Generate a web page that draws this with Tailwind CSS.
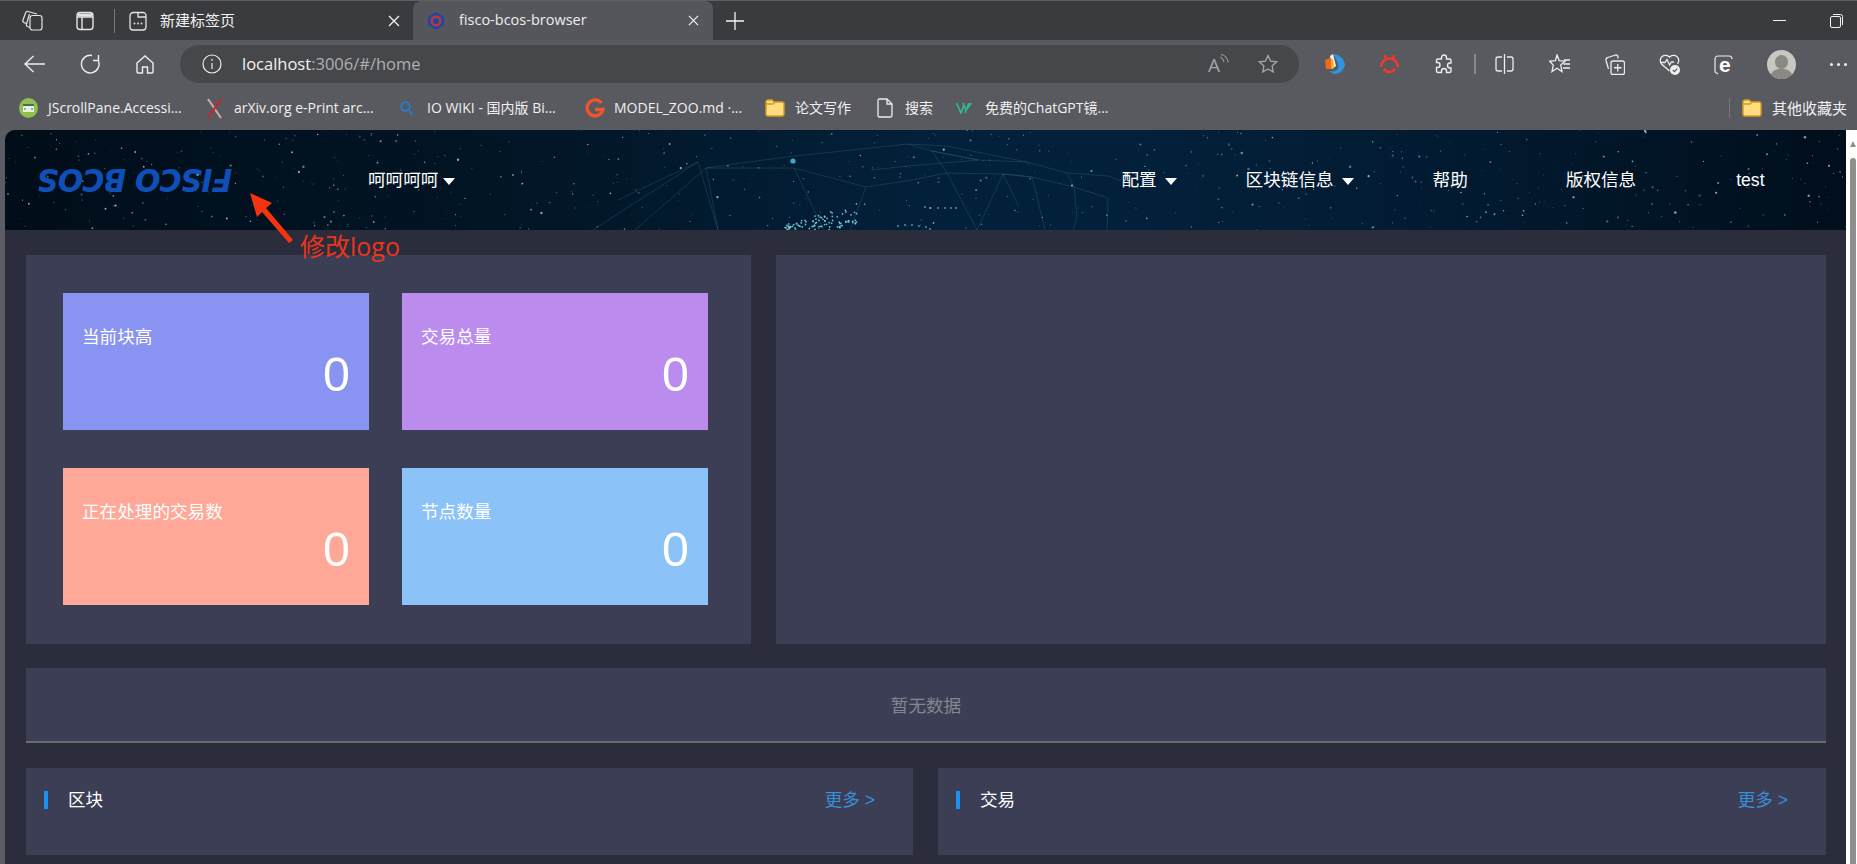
<!DOCTYPE html>
<html lang="en">
<head>
    <meta charset="UTF-8">
    <title>fisco-bcos-browser</title>
    <script src="https://cdn.jsdelivr.net/npm/@tailwindcss/browser@4"></script>
</head>
<body class="relative w-[1857px] h-[864px] overflow-hidden bg-[#5c5d62] font-['Open_Sans','Noto_Sans_CJK_SC',sans-serif]">

    <!-- tab strip -->
    <div class="flex items-center h-[40px] bg-[#3a3b3f] border-t border-[#5e5f63] text-[#f2f2f2]">
        <svg class="ml-[22px] w-[21px] h-[21px]" viewBox="0 0 21 21" fill="none" stroke="#e4e4e4" stroke-width="1.2"><rect x="8" y="5.5" width="12" height="14.5" rx="2.5"/><path d="M8 17.5 5.5 16.5a2 2 0 0 1-1-2.5L7.5 4 M5 14 2 12.5a2 2 0 0 1-1-2.5L3.5 3a2 2 0 0 1 2.5-1.5l9 2.5"/></svg>
        <svg class="ml-[33px] w-[18px] h-[20px]" viewBox="0 0 18 20" fill="none" stroke="#e4e4e4" stroke-width="1.4"><rect x="1" y="1.5" width="16" height="17" rx="3"/><path d="M1 6h16M6 6v12.5"/><path d="M2 2.5h14v3H2z" fill="#e4e4e4" stroke="none"/></svg>
        <div class="ml-[20px] w-px h-[24px] bg-[#77787c]"></div>
        <div class="flex items-center w-[298px] h-full">
            <svg class="ml-[14px] w-[18px] h-[20px]" viewBox="0 0 18 20" fill="none" stroke="#e4e4e4" stroke-width="1.3"><path d="M1 5a3.500 3.500 0 0 1 3.500-3.500H9V6h8M1 5v11a3 3 0 0 0 3 3h10a3 3 0 0 0 3-3V4.500a3 3 0 0 0-3-3H9"/><circle cx="5.500" cy="12.500" r=".9" fill="#e4e4e4" stroke="none"/><circle cx="9" cy="12.500" r=".9" fill="#e4e4e4" stroke="none"/><circle cx="12.500" cy="12.500" r=".9" fill="#e4e4e4" stroke="none"/></svg>
            <span class="ml-[13px] flex-1 text-[15px] leading-none">新建标签页</span>
            <svg class="mr-[13px] w-[12px] h-[12px]" viewBox="0 0 12 12" stroke="#f2f2f2" stroke-width="1.3"><path d="M1 1l10 10M11 1 1 11"/></svg>
        </div>
        <div class="flex items-center w-[300px] h-full bg-[#55565b] rounded-t-lg">
            <svg class="ml-[14px] w-[18px] h-[20px]" viewBox="0 0 18 20"><path d="M9 1l8 4.500v9L9 19l-8-4.500v-9z" fill="#1f4a9c"/><circle cx="9" cy="10" r="4.300" fill="none" stroke="#c4343c" stroke-width="2.400"/></svg>
            <span class="ml-[14px] flex-1 text-[14.500px] leading-none text-[#ededed]">fisco-bcos-browser</span>
            <svg class="mr-[14px] w-[11px] h-[11px]" viewBox="0 0 12 12" stroke="#f2f2f2" stroke-width="1.3"><path d="M1 1l10 10M11 1 1 11"/></svg>
        </div>
        <svg class="ml-[13px] w-[18px] h-[18px]" viewBox="0 0 18 18" stroke="#f5f5f5" stroke-width="1.3"><path d="M9 0v18M0 9h18"/></svg>
        <div class="flex-1"></div>
        <div class="w-[13px] h-px bg-[#f2f2f2]"></div>
        <svg class="ml-[44px] mr-[14px] w-[13px] h-[14px]" viewBox="0 0 13 14" fill="none" stroke="#f2f2f2" stroke-width="1"><rect x=".5" y="2.500" width="10" height="11" rx="1.500"/><path d="M3 .5h7.500a2 2 0 0 1 2 2V11"/></svg>
    </div>

    <!-- toolbar -->
    <div class="flex items-center h-[48px] bg-[#585a5f]">
        <svg class="ml-[24px] w-[21px] h-[18px]" viewBox="0 0 21 18" fill="none" stroke="#ededed" stroke-width="1.4"><path d="M21 9H1M9.500 1 1 9l8.500 8"/></svg>
        <svg class="ml-[35px] w-[20px] h-[20px]" viewBox="0 0 20 20" fill="none" stroke="#ededed" stroke-width="1.4"><path d="M12 1.500A8.800 8.800 0 1 0 18 6M18.500 1v5.500H13"/></svg>
        <svg class="ml-[36px] w-[18px] h-[19px]" viewBox="0 0 18 19" fill="none" stroke="#ededed" stroke-width="1.4"><path d="M1 8l8-7 8 7v9a1 1 0 0 1-1 1h-4.500v-6h-5v6H2a1 1 0 0 1-1-1z"/></svg>
        <div class="ml-[26px] flex items-center w-[1119px] h-[38px] rounded-full bg-[#46474b]">
            <svg class="ml-[22px] w-[20px] h-[20px]" viewBox="0 0 20 20" fill="none" stroke="#ededed" stroke-width="1.200"><circle cx="10" cy="10" r="9"/><path d="M10 9v6"/><circle cx="10" cy="5.800" r=".9" fill="#ededed" stroke="none"/></svg>
            <span class="ml-[20px] text-[16.500px] leading-none text-[#f2f2f2]">localhost<span class="text-[#aeafb2]">:3006/#/home</span></span>
            <div class="flex-1"></div>
            <div class="relative w-[20px] h-[20px] mr-[30px]">
                <span class="absolute left-0 top-[1px] text-[19px] leading-[20px] text-[#a5a6a9]">A</span>
                <svg class="absolute left-[10px] top-0 w-[11px] h-[11px]" viewBox="0 0 11 11" fill="none" stroke="#a5a6a9"><path d="M2 3a6 6 0 0 1 4 5M3 .5a8 8 0 0 1 7 8"/></svg>
            </div>
            <svg class="mr-[21px] w-[20px] h-[20px]" viewBox="0 0 20 20" fill="none" stroke="#a5a6a9" stroke-width="1.300"><path d="M10 1.500l2.600 5.600 6 .7-4.500 4.100 1.200 6L10 15l-5.300 2.900 1.200-6L1.400 7.800l6-.7z"/></svg>
        </div>
        <svg class="ml-[25px] w-[21px] h-[22px]" viewBox="0 0 21 22"><path d="M9 1c6 0 11 4 12 11-1 5-5 9-10 9-2 0-4-1-5-3 3 1 7 0 8-3 1-4-2-9-5-14z" fill="#2f93de"/><path d="M6 3 9 1l3 12-4 3z" fill="#f2f2f2"/><path d="M1 7l5-2 2 1v10H2z" fill="#ef6a1c"/><path d="M7 6l2 0 1 8-3 2z" fill="#f3b01e"/></svg>
        <svg class="ml-[34px] w-[21px] h-[22px]" viewBox="0 0 21 22" fill="none" stroke="#ee3a2c" stroke-width="2.600"><path d="M2 14A8.500 8.500 0 0 1 19 14"/><path d="M5 15.500a6 6 0 0 0 11 0"/><path d="M7 7 6 2M14 7l1-5"/></svg>
        <svg class="ml-[34px] w-[19px] h-[21px]" viewBox="0 0 19 21" fill="none" stroke="#ededed" stroke-width="1.400"><path d="M7.500 3.500a2.500 2.500 0 0 1 5 0V5h3A1.500 1.500 0 0 1 17 6.500V9h-1a2.500 2.500 0 0 0 0 5h1v3a1.500 1.500 0 0 1-1.500 1.500h-3V17a2.500 2.500 0 0 0-5 0v1.500H4A1.500 1.500 0 0 1 2.500 17v-3.500h1a2.500 2.500 0 0 0 0-5h-1V6.500A1.500 1.500 0 0 1 4 5h3.500z"/></svg>
        <div class="ml-[21px] w-[2px] h-[20px] bg-[#88898c]"></div>
        <svg class="ml-[19px] w-[19px] h-[20px]" viewBox="0 0 19 20" fill="none" stroke="#ededed" stroke-width="1.300"><path d="M9.500 0v20M7 3H3a2 2 0 0 0-2 2v10a2 2 0 0 0 2 2h4M12 3h4a2 2 0 0 1 2 2v10a2 2 0 0 1-2 2h-4"/></svg>
        <svg class="ml-[35px] w-[21px] h-[20px]" viewBox="0 0 21 20" fill="none" stroke="#ededed" stroke-width="1.300"><path d="M8 1l2.300 5.700 5.700.5-4.300 3.900 1.300 6.400L8 14.200 3 17.500l1.300-6.400L.7 7.200l5.700-.5z"/><path d="M15 6h6M14.500 10h6.500M14 14h7"/></svg>
        <svg class="ml-[35px] w-[20px] h-[21px]" viewBox="0 0 20 21" fill="none" stroke="#ededed" stroke-width="1.300"><rect x="6" y="7" width="13.500" height="13.500" rx="2"/><path d="M12.750 10v7.500M9 13.750h7.500"/><path d="M3.500 15 1 6.500a2.500 2.500 0 0 1 1.800-3L10.500 1a2 2 0 0 1 2.500 2v1.500"/></svg>
        <svg class="ml-[34px] w-[21px] h-[22px]" viewBox="0 0 21 22" fill="none" stroke="#ededed" stroke-width="1.300"><path d="M10.500 18 2.500 11a5.200 5.200 0 0 1 8-6.800 5.200 5.200 0 0 1 8 6.800"/><path d="M1.500 9.500H6l2-3 2.500 5.500 2-3h2.500"/><circle cx="16" cy="17" r="5" fill="#f0f0f0" stroke="none"/><path d="M13.800 17l1.600 1.600 2.800-3" stroke="#585a5f" stroke-width="1.300"/></svg>
        <svg class="ml-[34px] w-[20px] h-[21px]" viewBox="0 0 20 21" fill="none" stroke="#ededed" stroke-width="1.200"><path d="M4 20 2.500 19A2 2 0 0 1 1 17V5a3 3 0 0 1 3-3h11a3 3 0 0 1 3 3"/><text x="5" y="18" font-size="21" font-weight="700" font-family="Liberation Sans" fill="#ffffff" stroke="none">e</text></svg>
        <div class="relative ml-[33px] w-[29px] h-[29px] rounded-full overflow-hidden bg-[#c9c7c1]">
            <div class="absolute left-[8px] top-[5px] w-[13px] h-[14px] rounded-full bg-[#8b8983]"></div>
            <div class="absolute left-[3px] top-[19px] w-[23px] h-[18px] rounded-full bg-[#8b8983]"></div>
        </div>
        <div class="ml-[34px] flex gap-[4px]">
            <div class="w-[3px] h-[3px] rounded-full bg-[#f0f0f0]"></div>
            <div class="w-[3px] h-[3px] rounded-full bg-[#f0f0f0]"></div>
            <div class="w-[3px] h-[3px] rounded-full bg-[#f0f0f0]"></div>
        </div>
    </div>

    <!-- bookmarks -->
    <div class="flex items-center h-[42px] pb-[2px] bg-[#585a5f] text-[14px] leading-none text-[#f0f0f0]">
        <div class="ml-[19px] w-[188px] flex items-center">
            <svg class="w-[19px] h-[20px]" viewBox="0 0 19 20"><ellipse cx="9.500" cy="10" rx="9.500" ry="10" fill="#8fc04c"/><rect x="4" y="6" width="11" height="8" fill="#e8f0dc"/><rect x="4" y="6" width="11" height="2" fill="#55636a"/><path d="M6.500 10l-1 1 1 1M12.500 10l1 1-1 1" stroke="#55636a" fill="none"/></svg>
            <span class="ml-[10px]">JScrollPane.Accessi...</span>
        </div>
        <div class="w-[193px] flex items-center">
            <svg class="w-[15px] h-[21px]" viewBox="0 0 15 21" stroke-width="2.200"><path d="M1 1l13 19" stroke="#c9a9a5"/><path d="M14 1 1 20" stroke="#c9252b"/></svg>
            <span class="ml-[12px]">arXiv.org e-Print arc...</span>
        </div>
        <div class="w-[185px] flex items-center">
            <svg class="w-[13px] h-[14px]" viewBox="0 0 13 14" fill="none" stroke="#1f7fd4" stroke-width="1.800"><circle cx="5.500" cy="5.500" r="4.300"/><path d="M8.500 9l4 4.500"/></svg>
            <span class="ml-[14px]">IO WIKI - 国内版 Bi...</span>
        </div>
        <div class="w-[180px] flex items-center">
            <svg class="w-[20px] h-[20px]" viewBox="0 0 20 20" fill="none" stroke="#f0532d" stroke-width="3.400"><path d="M16.500 5A8 8 0 1 0 18 11.500H10"/></svg>
            <span class="ml-[9px]">MODEL_ZOO.md ·...</span>
        </div>
        <div class="w-[112px] flex items-center">
            <svg class="w-[20px] h-[18px]" viewBox="0 0 20 18"><path d="M1 3a2 2 0 0 1 2-2h4l2 2h8a2 2 0 0 1 2 2v10a2 2 0 0 1-2 2H3a2 2 0 0 1-2-2z" fill="#ffdc7d" stroke="#cf9f25" stroke-width="1.400"/><path d="M1 5h7l2-2" fill="none" stroke="#cf9f25" stroke-width="1.400"/></svg>
            <span class="ml-[10px]">论文写作</span>
        </div>
        <div class="w-[79px] flex items-center">
            <svg class="w-[16px] h-[20px]" viewBox="0 0 16 20" fill="none" stroke="#ededed" stroke-width="1.300"><path d="M1 2.500A1.500 1.500 0 0 1 2.500 1H10l5 5v11.500a1.500 1.500 0 0 1-1.500 1.500h-11A1.500 1.500 0 0 1 1 17.500zM10 1v5h5"/></svg>
            <span class="ml-[12px]">搜索</span>
        </div>
        <div class="flex items-center">
            <svg class="w-[17px] h-[12px]" viewBox="0 0 17 12" fill="none" stroke="#35b58a" stroke-width="1.800"><path d="M0.500 1 5 11 8 3M7 1l3 7 5.500-7M13 1l-4 10"/></svg>
            <span class="ml-[12px]">免费的ChatGPT镜...</span>
        </div>
        <div class="flex-1"></div>
        <div class="w-px h-[20px] bg-[#77787c]"></div>
        <svg class="ml-[12px] w-[20px] h-[18px]" viewBox="0 0 20 18"><path d="M1 3a2 2 0 0 1 2-2h4l2 2h8a2 2 0 0 1 2 2v10a2 2 0 0 1-2 2H3a2 2 0 0 1-2-2z" fill="#ffdc7d" stroke="#cf9f25" stroke-width="1.400"/><path d="M1 5h7l2-2" fill="none" stroke="#cf9f25" stroke-width="1.400"/></svg>
        <span class="ml-[10px] mr-[10px] text-[15px]">其他收藏夹</span>
    </div>

    <!-- page -->
    <div class="flex h-[734px] pl-[5px] font-['Liberation_Sans','Noto_Sans_CJK_SC',sans-serif]">
        <div class="w-[1841px] bg-[#2c2d3c] rounded-tl-[10px] overflow-hidden">

            <header class="relative flex items-center h-[100px] text-[17.600px] text-white bg-[linear-gradient(90deg,#010d19_0%,#021627_30%,#03203a_50%,#03203a_62%,#021a30_80%,#010e1b_100%)]">
                <svg id="stars" class="absolute inset-0 w-full h-full" viewBox="0 0 1841 100">
                    <g stroke="#3f7f8c" stroke-opacity=".4" stroke-width=".7" fill="none">
                        <path d="M903 14 927 21 973 30 1022 32 1062 43 1069 57 1072 87 1068 100"/>
                        <path d="M903 14 942 16 1022 32 M927 21 942 43 972 100 M927 21 973 30 M903 36 973 30 M942 43 998 44 1027 47 1069 57 1103 68 1102 100 M1062 43 1064 43 1103 46 1134 58"/>
                        <path d="M866 40 903 36 M701 38 789 38 M789 38 861 57 M845 100 861 57 M789 38 819 100 M701 38 781 27 903 14 M701 38 713 100 M693 32 713 100 M693 32 613 70 M693 32 588 100 M701 38 630 100 M861 57 907 50 942 43 M972 100 998 44 1014 77 M998 44 1027 47 1040 100"/>
                    </g>
                    <g id="globe-dots" fill="#7fd3e0"></g>
                    <g id="star-dots" fill="#b9d3dc"></g>
                </svg>
                <span class="relative ml-[38px] w-[325px] text-[#0f50b8] font-['DejaVu_Sans'] font-bold italic text-[32px] leading-none whitespace-nowrap">
                    <span class="inline-block origin-center [transform:rotate(180deg)_scaleX(.94)] w-[195px] text-center tracking-[-1px]">FISCO BCOS</span>
                </span>
                <nav class="relative flex items-center">
                    <span>呵呵呵呵</span>
                    <span class="ml-[5px] mt-[3px] w-0 h-0 border-x-[6px] border-x-transparent border-t-[7px] border-t-white"></span>
                </nav>
                <nav class="relative flex items-center ml-[666px]">
                    <span>配置</span>
                    <span class="ml-[8px] mt-[3px] w-0 h-0 border-x-[6px] border-x-transparent border-t-[7px] border-t-white"></span>
                    <span class="ml-[69px]">区块链信息</span>
                    <span class="ml-[8px] mt-[3px] w-0 h-0 border-x-[6px] border-x-transparent border-t-[7px] border-t-white"></span>
                    <span class="ml-[79px]">帮助</span>
                    <span class="ml-[98px]">版权信息</span>
                    <span class="ml-[100px]">test</span>
                </nav>
            </header>

            <main class="pl-[21px] pr-[20px] pt-[25px]">
                <div class="flex gap-[25px] h-[389px]">
                    <div class="w-[725px] bg-[#3c3e56] pl-[37px] pt-[38px]">
                        <div class="grid grid-cols-[306px_306px] grid-rows-[137px_137px] gap-x-[33px] gap-y-[38px] text-white">
                            <div class="bg-[#8893f2] pl-[19px] pr-[19px] pt-[31px]">
                                <div class="text-[17.600px] leading-[26px]">当前块高</div>
                                <div class="text-right text-[48.400px] leading-[49px]">0</div>
                            </div>
                            <div class="bg-[#bb8cee] pl-[19px] pr-[19px] pt-[31px]">
                                <div class="text-[17.600px] leading-[26px]">交易总量</div>
                                <div class="text-right text-[48.400px] leading-[49px]">0</div>
                            </div>
                            <div class="bg-[#ffa897] pl-[19px] pr-[19px] pt-[31px]">
                                <div class="text-[17.600px] leading-[26px]">正在处理的交易数</div>
                                <div class="text-right text-[48.400px] leading-[49px]">0</div>
                            </div>
                            <div class="bg-[#8bc3f8] pl-[19px] pr-[19px] pt-[31px]">
                                <div class="text-[17.600px] leading-[26px]">节点数量</div>
                                <div class="text-right text-[48.400px] leading-[49px]">0</div>
                            </div>
                        </div>
                    </div>
                    <div class="flex-1 bg-[#3c3e56]"></div>
                </div>

                <div class="mt-[24px] flex items-center justify-center h-[75px] pt-[3px] bg-[#3c3e56] border-b-2 border-[#6b6b6b] text-[17.600px] text-[#85868f]">暂无数据</div>

                <div class="mt-[25px] flex gap-[25px]">
                    <div class="flex items-start w-[887px] h-[87px] pt-[23px] pl-[18px] pr-[38px] bg-[#3c3e56] text-[17.600px] leading-[18px] text-white">
                        <div class="w-[4px] h-[18px] bg-[#1e90f0]"></div>
                        <div class="ml-[20px] flex-1">区块</div>
                        <div class="text-[#3a8fd8]">更多 &gt;</div>
                    </div>
                    <div class="flex items-start flex-1 h-[87px] pt-[23px] pl-[18px] pr-[38px] bg-[#3c3e56] text-[17.600px] leading-[18px] text-white">
                        <div class="w-[4px] h-[18px] bg-[#1e90f0]"></div>
                        <div class="ml-[20px] flex-1">交易</div>
                        <div class="text-[#3a8fd8]">更多 &gt;</div>
                    </div>
                </div>
            </main>
        </div>

        <!-- scrollbar -->
        <div class="w-[11px] bg-white pl-[4px] pr-[1px]">
            <div class="w-0 h-0 mt-[11px] border-x-[3px] border-x-transparent border-b-[6px] border-b-[#8f8f8f]"></div>
            <div class="mt-[11px] h-[706px] bg-[#8f8f8f] rounded-t-[3px]"></div>
        </div>
    </div>

    <!-- annotation drawn over the screenshot -->
    <svg class="absolute left-[245px] top-[188px] w-[52px] h-[56px]" viewBox="0 0 52 56"><path d="M5 5 27 15 21 20 48 52 44 55 17 24 12 29z" fill="#f5330f"/></svg>
    <span class="absolute left-[300px] top-[229px] text-[25px] leading-[34px] text-[#e9361b]">修改logo</span>

    <script>
        // seeded so the sky is the same on every load
        let seed = 42;
        const rnd = () => { seed = (seed * 16807) % 2147483647; return seed / 2147483647; };
        const NS = 'http://www.w3.org/2000/svg';
        const dot = (g, x, y, r, o) => {
            const c = document.createElementNS(NS, 'circle');
            c.setAttribute('cx', x); c.setAttribute('cy', y); c.setAttribute('r', r); c.setAttribute('opacity', o);
            g.appendChild(c);
        };
        const sky = document.getElementById('star-dots');
        for (let i = 0; i < 620; i++) {
            dot(sky, (rnd() * 1841).toFixed(1), (rnd() * 100).toFixed(1), (0.4 + rnd() * rnd() * 1).toFixed(2), (0.25 + rnd() * 0.6).toFixed(2));
        }
        dot(sky, 788, 31, 2.6, 1);
        sky.lastChild.setAttribute('fill', '#3fa7c8');
        const globe = document.getElementById('globe-dots');
        // dense patch at the top of the globe
        for (let i = 0; i < 90; i++) {
            const x = 780 + rnd() * 72;
            const y = 100 - rnd() * (x - 775) * 0.32 - rnd() * 4;
            dot(globe, x.toFixed(1), y.toFixed(1), 0.9, 0.85);
        }
        [[893,96],[900,95],[907,95],[914,96],[921,97],[925,99],[920,77],[925,78],[933,78],[940,78],[946,78],[951,78]].forEach(p => dot(globe, p[0], p[1], 0.9, 0.7));
    </script>
</body>
</html>
